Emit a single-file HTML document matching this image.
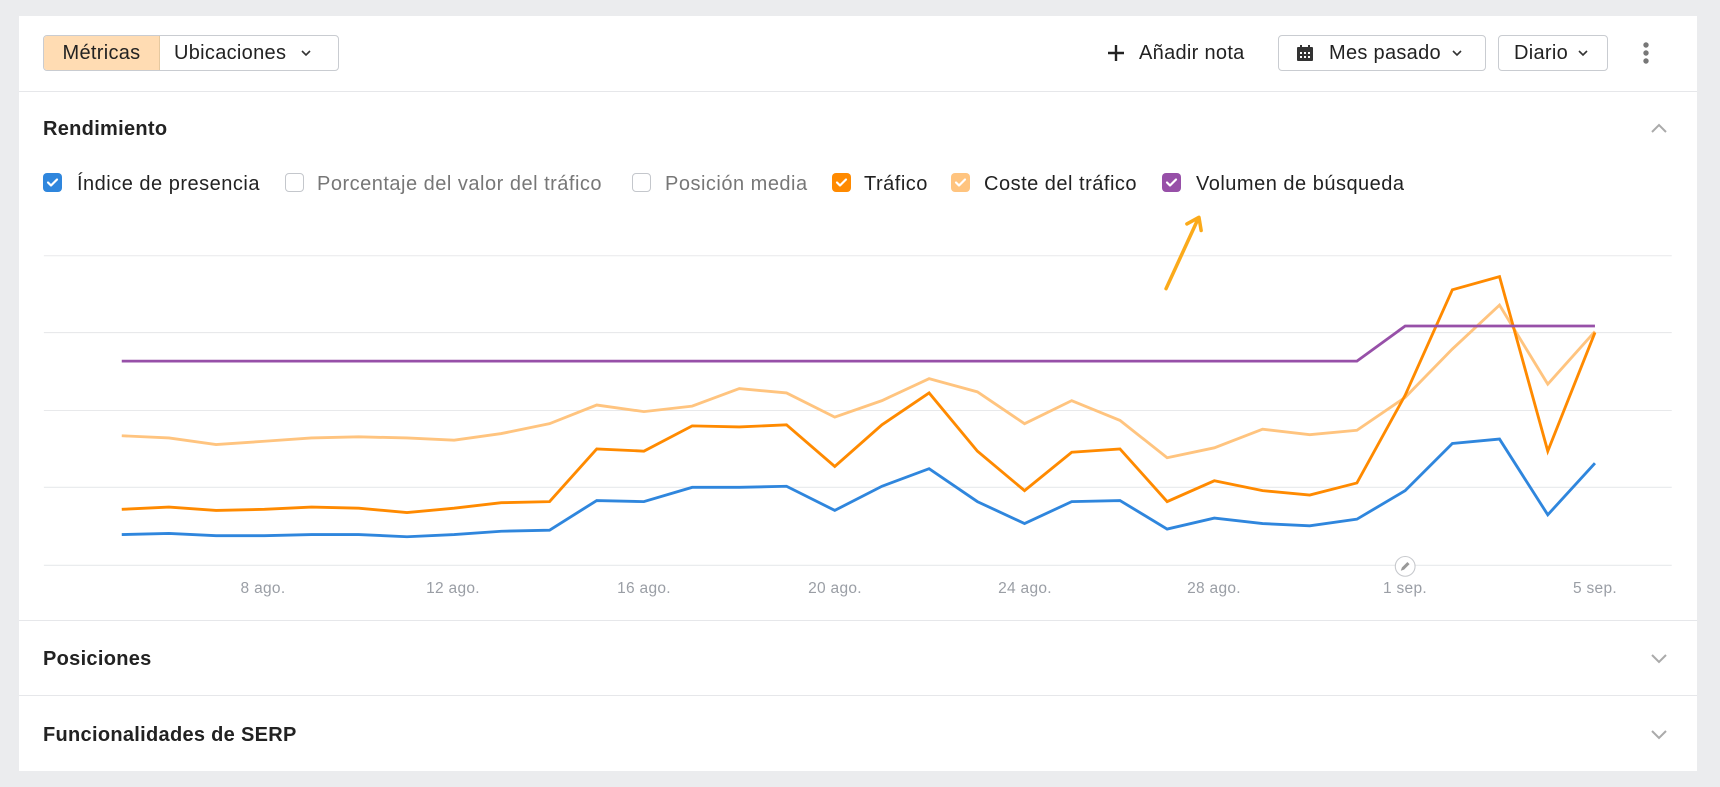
<!DOCTYPE html>
<html><head><meta charset="utf-8">
<style>
*{box-sizing:border-box;margin:0;padding:0}
body{width:1720px;height:787px;background:#ebecee;font-family:"Liberation Sans",sans-serif;color:#1f2328;position:relative;overflow:hidden}
.panel{position:absolute;left:19px;top:16px;width:1678px;height:755px;background:#fff}
.a{position:absolute;white-space:nowrap}
.btn{position:absolute;top:35px;height:36px;border:1px solid #c9ccd1;border-radius:4px;display:flex;align-items:center;font-size:20px;letter-spacing:0.3px;color:#222}
.hr{position:absolute;left:19px;width:1678px;height:1px;background:#e6e7ea}
.cb{position:absolute;top:173px;width:19px;height:19px;border-radius:4px}
.cb svg{position:absolute;left:2px;top:2px}
.cb.off{border:1px solid #c4c7cc;background:#fff}
.lt{position:absolute;top:173px;font-size:20px;letter-spacing:0.5px;color:#222}
.lt.off{color:#777}
.h{position:absolute;font-size:20px;letter-spacing:0.3px;font-weight:bold;color:#222}
.xl{position:absolute;top:580px;font-size:15.5px;letter-spacing:0.3px;color:#9a9ea5;transform:translateX(-50%)}
</style></head><body>
<div class="panel"></div>
<div class="btn" style="left:43px;width:296px;overflow:hidden">
 <div style="background:#ffdcb3;height:100%;width:116px;display:flex;align-items:center;justify-content:center;border-right:1px solid #e6c9a0">Métricas</div>
 <div style="padding-left:14px">Ubicaciones</div>
 <svg style="margin-left:14px" width="12" height="8" viewBox="0 0 12 8"><path d="M2 2l4 4 4-4" fill="none" stroke="#333" stroke-width="1.6"/></svg>
</div>
<svg class="a" style="left:1106px;top:43px" width="20" height="20" viewBox="0 0 20 20"><path d="M10 2v16M2 10h16" stroke="#222" stroke-width="2.4"/></svg>
<div class="a" style="left:1139px;top:42px;font-size:20px;letter-spacing:0.3px;color:#222">Añadir nota</div>
<div class="btn" style="left:1278px;width:208px;padding-left:16px">
 <svg width="20" height="20" viewBox="0 0 20 20"><rect x="2" y="4" width="16" height="14" rx="1" fill="#333"/><rect x="5" y="2" width="2" height="4" fill="#333"/><rect x="13" y="2" width="2" height="4" fill="#333"/><g fill="#fff"><rect x="5" y="9" width="2" height="2"/><rect x="9" y="9" width="2" height="2"/><rect x="13" y="9" width="2" height="2"/><rect x="5" y="13" width="2" height="2"/><rect x="9" y="13" width="2" height="2"/><rect x="13" y="13" width="2" height="2"/></g></svg>
 <span style="margin-left:14px">Mes pasado</span>
 <svg style="margin-left:10px" width="12" height="8" viewBox="0 0 12 8"><path d="M2 2l4 4 4-4" fill="none" stroke="#333" stroke-width="1.6"/></svg>
</div>
<div class="btn" style="left:1498px;width:110px;padding-left:15px">Diario
 <svg style="margin-left:9px" width="12" height="8" viewBox="0 0 12 8"><path d="M2 2l4 4 4-4" fill="none" stroke="#333" stroke-width="1.6"/></svg>
</div>
<svg class="a" style="left:1640px;top:41px" width="12" height="26" viewBox="0 0 12 26"><circle cx="6" cy="4" r="2.7" fill="#777"/><circle cx="6" cy="12" r="2.7" fill="#777"/><circle cx="6" cy="20" r="2.7" fill="#777"/></svg>
<div class="hr" style="top:91px"></div>
<div class="h" style="left:43px;top:118px">Rendimiento</div>
<svg class="a" style="left:1650px;top:122px" width="18" height="12" viewBox="0 0 18 12"><path d="M2 10l7-7 7 7" fill="none" stroke="#aaa" stroke-width="2"/></svg>

<div class="cb" style="left:43px;background:#2f86dd"><svg width="15" height="15" viewBox="0 0 15 15"><path d="M3 7.5l3 3 6-6" fill="none" stroke="#fff" stroke-width="2.2" stroke-linecap="round" stroke-linejoin="round"/></svg></div>
<div class="lt" style="left:77px">Índice de presencia</div>
<div class="cb off" style="left:285px"></div>
<div class="lt off" style="left:317px">Porcentaje del valor del tráfico</div>
<div class="cb off" style="left:632px"></div>
<div class="lt off" style="left:665px">Posición media</div>
<div class="cb" style="left:832px;background:#ff8a00"><svg width="15" height="15" viewBox="0 0 15 15"><path d="M3 7.5l3 3 6-6" fill="none" stroke="#fff" stroke-width="2.2" stroke-linecap="round" stroke-linejoin="round"/></svg></div>
<div class="lt" style="left:864px">Tráfico</div>
<div class="cb" style="left:951px;background:#ffc47f"><svg width="15" height="15" viewBox="0 0 15 15"><path d="M3 7.5l3 3 6-6" fill="none" stroke="#fff" stroke-width="2.2" stroke-linecap="round" stroke-linejoin="round"/></svg></div>
<div class="lt" style="left:984px">Coste del tráfico</div>
<div class="cb" style="left:1162px;background:#9750a8"><svg width="15" height="15" viewBox="0 0 15 15"><path d="M3 7.5l3 3 6-6" fill="none" stroke="#fff" stroke-width="2.2" stroke-linecap="round" stroke-linejoin="round"/></svg></div>
<div class="lt" style="left:1196px">Volumen de búsqueda</div>
<svg class="a" style="left:0;top:0" width="1720" height="787" viewBox="0 0 1568 717" preserveAspectRatio="none">
 <g stroke="#e8e9eb" stroke-width="1"><path d="M40 233H1524M40 303H1524M40 374H1524M40 444H1524M40 515H1524"/></g>
 <g fill="none" stroke-width="2.6" stroke-linejoin="miter">
 <polyline stroke="#ffc47f" points="111,397 154,399 197,405 241,402 284,399 327,398 371,399 414,401 457,395 501,386 544,369 587,375 631,370 674,354 717,358 761,380 804,365 847,345 891,357 934,386 977,365 1021,383 1064,417 1107,408 1151,391 1194,396 1237,392 1281,362 1324,318 1367,278 1411,350 1454,302"/>
 <polyline stroke="#ff8a00" points="111,464 154,462 197,465 241,464 284,462 327,463 371,467 414,463 457,458 501,457 544,409 587,411 631,388 674,389 717,387 761,425 804,387 847,358 891,411 934,447 977,412 1021,409 1064,457 1107,438 1151,447 1194,451 1237,440 1281,360 1324,264 1367,252 1411,411 1454,303"/>
 <polyline stroke="#2f86dd" points="111,487 154,486 197,488 241,488 284,487 327,487 371,489 414,487 457,484 501,483 544,456 587,457 631,444 674,444 717,443 761,465 804,443 847,427 891,457 934,477 977,457 1021,456 1064,482 1107,472 1151,477 1194,479 1237,473 1281,447 1324,404 1367,400 1411,469 1454,422"/>
 <polyline stroke="#9750a8" points="111,329 1237,329 1281,297 1454,297"/>
 </g>
 <path d="M1063 263L1091 202M1082 204L1093 198L1095 210" fill="none" stroke="#fbaa1a" stroke-width="3.2" stroke-linecap="round" stroke-linejoin="round"/>
 <circle cx="1281" cy="516" r="9" fill="#fff" stroke="#c7c9cd" stroke-width="1"/>
 <path d="M1277 520l1-3 5-5 2 2-5 5z" fill="#999"/>
</svg>
<div class="xl" style="left:263px">8 ago.</div>
<div class="xl" style="left:453px">12 ago.</div>
<div class="xl" style="left:644px">16 ago.</div>
<div class="xl" style="left:835px">20 ago.</div>
<div class="xl" style="left:1025px">24 ago.</div>
<div class="xl" style="left:1214px">28 ago.</div>
<div class="xl" style="left:1405px">1 sep.</div>
<div class="xl" style="left:1595px">5 sep.</div>
<div class="hr" style="top:620px"></div>
<div class="h" style="left:43px;top:648px">Posiciones</div>
<svg class="a" style="left:1650px;top:653px" width="18" height="12" viewBox="0 0 18 12"><path d="M2 2l7 7 7-7" fill="none" stroke="#aaa" stroke-width="2"/></svg>
<div class="hr" style="top:695px"></div>
<div class="h" style="left:43px;top:724px">Funcionalidades de SERP</div>
<svg class="a" style="left:1650px;top:729px" width="18" height="12" viewBox="0 0 18 12"><path d="M2 2l7 7 7-7" fill="none" stroke="#aaa" stroke-width="2"/></svg>
</body></html>
